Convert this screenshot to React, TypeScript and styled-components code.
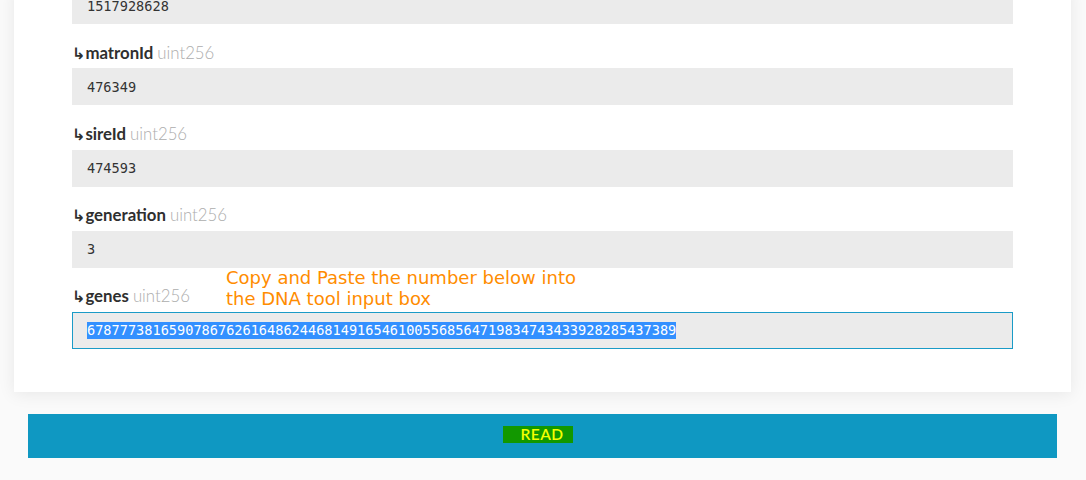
import React from "react";
import styled, { createGlobalStyle } from "styled-components";

const Global = createGlobalStyle`
  html, body { margin: 0; padding: 0; background: #fafafa; }
  body { font-family: Lato, "Open Sans", sans-serif; overflow: hidden; }
`;

const Page = styled.div`
  width: 1086px;
  height: 480px;
  overflow: hidden;
  display: flex;
  flex-direction: column;
  background: #fafafa;
`;

const Card = styled.div`
  margin: -13px 15px 0 14px;
  background: #ffffff;
  padding: 0 58px 43px 58px;
  box-shadow: 0 2px 16px rgba(0, 0, 0, 0.08);
  display: flex;
  flex-direction: column;
`;

const Field = styled.div`
  display: flex;
  flex-direction: column;
`;

const Label = styled.div`
  position: relative;
  margin: 16.5px 0 3.83px;
  height: 24px;
  line-height: 24px;
  font-size: 16.8px;
  font-weight: 700;
  color: #2f2f2f;
  display: flex;
  align-items: center;
`;

const Arrow = styled.span`
  font-family: "DejaVu Sans", sans-serif;
  font-weight: 700;
  font-size: 16px;
  position: relative;
  top: 1px;
`;

const TypeName = styled.span`
  font-weight: 300;
  color: #adadad;
  margin-left: 4px;
`;

const Note = styled.div`
  position: absolute;
  left: 154px;
  top: -17.5px;
  font-family: "DejaVu Sans", Verdana, sans-serif;
  font-weight: 400;
  font-size: 18px;
  line-height: 21px;
  color: #ff8c00;
  white-space: nowrap;
`;

const Value = styled.div<{ $focused?: boolean }>`
  box-sizing: border-box;
  height: 37px;
  background: #ebebeb;
  border: 1px solid ${(p) => (p.$focused ? "#1a9bc7" : "#ebebeb")};
  padding: 0 14px;
  display: flex;
  align-items: center;
  font-family: "DejaVu Sans Mono", "Liberation Mono", monospace;
  font-size: 13.6px;
  color: #333333;
`;

const Selected = styled.span`
  background: #3390ff;
  color: #ffffff;
  line-height: 17px;
`;

const ButtonRow = styled.div`
  margin: 22px 29px 0 28px;
  height: 44px;
  background: #0f98c2;
  display: flex;
  align-items: center;
  justify-content: center;
`;

const ReadLabel = styled.span`
  background: #129800;
  color: #f5ff00;
  font-family: Lato, sans-serif;
  font-size: 15.5px;
  font-weight: 600;
  letter-spacing: 0.4px;
  line-height: 17px;
  padding: 0 10px 0 18px;
  margin: 0 9px 4px 0;
`;

type F = { name: string; value: string };

const fields: F[] = [
  { name: "matronId", value: "476349" },
  { name: "sireId", value: "474593" },
  { name: "generation", value: "3" },
];

export default function App() {
  return (
    <Page>
      <Global />
      <Card>
        <Value>1517928628</Value>
        {fields.map((f) => (
          <Field key={f.name}>
            <Label>
              <Arrow>↳</Arrow>
              {f.name}
              <TypeName>uint256</TypeName>
            </Label>
            <Value>{f.value}</Value>
          </Field>
        ))}
        <Field>
          <Label>
            <Arrow>↳</Arrow>
            genes
            <TypeName>uint256</TypeName>
            <Note>
              Copy and Paste the number below into
              <br />
              the DNA tool input box
            </Note>
          </Label>
          <Value $focused>
            <Selected>678777381659078676261648624468149165461005568564719834743433928285437389</Selected>
          </Value>
        </Field>
      </Card>
      <ButtonRow>
        <ReadLabel>READ</ReadLabel>
      </ButtonRow>
    </Page>
  );
}
